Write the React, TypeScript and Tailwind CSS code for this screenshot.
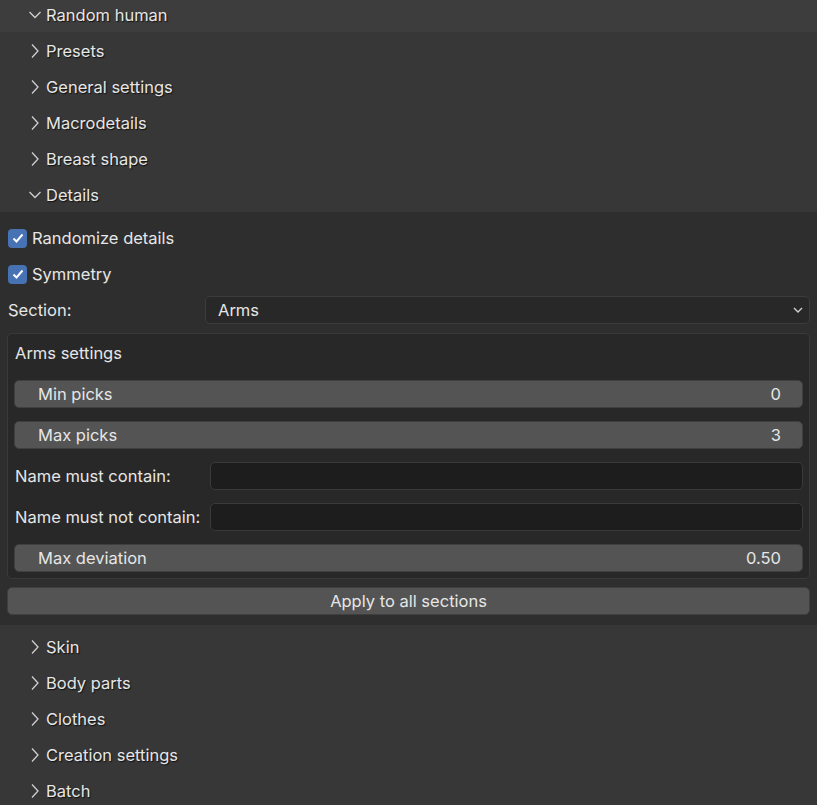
import React from 'react';

const Chevron: React.FC<{ open?: boolean }> = ({ open }) => (
  <svg width="14" height="14" viewBox="0 0 14 14" className="shrink-0">
    {open ? (
      <path d="M1.5 4 L7 9.5 L12.5 4" fill="none" stroke="#cfcfcf" strokeWidth="1.3" />
    ) : (
      <path d="M4 0.5 L10 7 L4 13.5" fill="none" stroke="#cfcfcf" strokeWidth="1.3" />
    )}
  </svg>
);

const Header: React.FC<{ label: string; open?: boolean }> = ({ label, open }) => (
  <div className="flex items-center h-[36px] pl-[28px] gap-[4px]">
    <Chevron open={open} />
    <span className="text-[16.5px] text-[#e6e6e6] [text-shadow:1px_1px_1px_#111]">{label}</span>
  </div>
);

const Check: React.FC<{ label: string }> = ({ label }) => (
  <div className="flex items-center h-[36px] pl-[8px] gap-[5px]">
    <div className="w-[19px] h-[19px] rounded-[4px] bg-[#4772b3] flex items-center justify-center">
      <svg width="14" height="14" viewBox="0 0 14 14">
        <path d="M2.5 7.5 L5.5 10.5 L11.5 3.5" fill="none" stroke="#fff" strokeWidth="2" />
      </svg>
    </div>
    <span className="text-[16.5px] text-[#e6e6e6]">{label}</span>
  </div>
);

const Slider: React.FC<{ label: string; value: string }> = ({ label, value }) => (
  <div className="h-[28px] rounded-[5px] bg-[#545454] border border-[#3f3f3f] flex items-center justify-between pl-[23px] pr-[21px]">
    <span className="text-[16.5px] text-[#e6e6e6]">{label}</span>
    <span className="text-[16.5px] text-[#e6e6e6]">{value}</span>
  </div>
);

const Field: React.FC<{ label: string }> = ({ label }) => (
  <div className="flex items-center h-[28px]">
    <span className="w-[196px] pl-[1px] text-[16.5px] text-[#e6e6e6] whitespace-nowrap">{label}</span>
    <div className="flex-1 h-[28px] rounded-[5px] bg-[#1d1d1d] border border-[#3a3a3a]" />
  </div>
);

export default function App() {
  return (
    <div className="w-[817px] h-[805px] bg-[#373737] overflow-hidden font-['Inter','Noto_Sans',sans-serif]">
      <div className="bg-[#3d3d3d] h-[32px] flex items-center pl-[28px] gap-[4px] pb-[2px]">
        <Chevron open />
        <span className="text-[16.5px] text-[#e6e6e6] [text-shadow:1px_1px_1px_#111]">Random human</span>
      </div>
      <div className="mt-[1px]">
        <Header label="Presets" />
        <Header label="General settings" />
        <Header label="Macrodetails" />
        <Header label="Breast shape" />
        <Header label="Details" open />
      </div>
      <div className="-mt-[1px] bg-[#2e2e2e] pt-[8px] pb-[10px] pr-[7px]">
        <Check label="Randomize details" />
        <Check label="Symmetry" />
        <div className="flex items-center h-[36px] pl-[8px]">
          <span className="w-[197px] text-[16.5px] text-[#e6e6e6]">Section:</span>
          <div className="flex-1 h-[28px] rounded-[5px] bg-[#282828] border border-[#3c3c3c] flex items-center justify-between pl-[12px] pr-[5px]">
            <span className="text-[16.5px] text-[#e6e6e6]">Arms</span>
            <svg width="12" height="12" viewBox="0 0 12 12">
              <path d="M2 4 L6 8 L10 4" fill="none" stroke="#d0d0d0" strokeWidth="1.4" />
            </svg>
          </div>
        </div>
        <div className="ml-[7px] mt-[5px] rounded-[5px] bg-[#282828] border border-[#3a3a3a] pl-[6px] pr-[6px] pt-[7px] pb-[6px] flex flex-col gap-[13px]">
          <div className="text-[16.5px] text-[#e6e6e6] pl-[1px] h-[27px] -mb-[1px]">Arms settings</div>
          <Slider label="Min picks" value="0" />
          <Slider label="Max picks" value="3" />
          <Field label="Name must contain:" />
          <Field label="Name must not contain:" />
          <Slider label="Max deviation" value="0.50" />
        </div>
        <div className="ml-[7px] mt-[8px] h-[28px] rounded-[5px] bg-[#545454] border border-[#3f3f3f] flex items-center justify-center">
          <span className="text-[16.5px] text-[#e6e6e6]">Apply to all sections</span>
        </div>
      </div>
      <div className="pt-[4px]">
        <Header label="Skin" />
        <Header label="Body parts" />
        <Header label="Clothes" />
        <Header label="Creation settings" />
        <Header label="Batch" />
      </div>
    </div>
  );
}
